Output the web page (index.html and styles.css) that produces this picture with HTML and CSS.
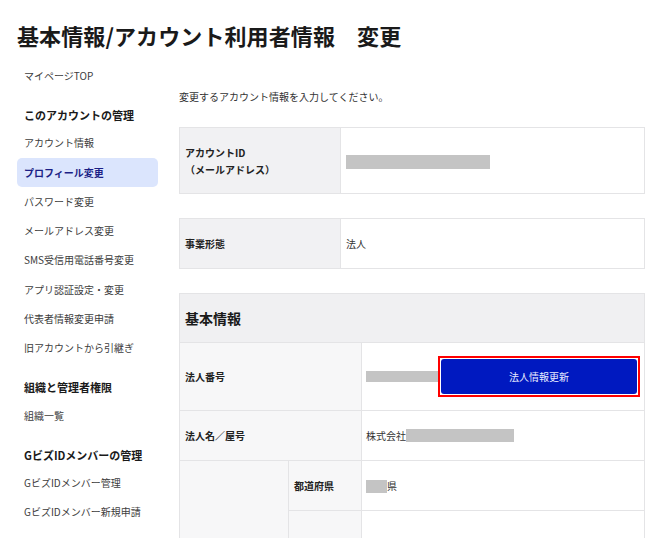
FILE: index.html
```html
<!DOCTYPE html>
<html lang="ja">
<head>
<meta charset="utf-8">
<title>基本情報/アカウント利用者情報 変更</title>
<link rel="stylesheet" href="styles.css">
</head>
<body>
<h1 class="page-title">基本情報/アカウント利用者情報　変更</h1>
<div class="layout">
  <nav class="sidenav">
    <a class="nav-item" href="#">マイページTOP</a>
    <div class="nav-heading">このアカウントの管理</div>
    <a class="nav-item" href="#">アカウント情報</a>
    <a class="nav-item active" href="#">プロフィール変更</a>
    <a class="nav-item" href="#">パスワード変更</a>
    <a class="nav-item" href="#">メールアドレス変更</a>
    <a class="nav-item" href="#">SMS受信用電話番号変更</a>
    <a class="nav-item" href="#">アプリ認証設定・変更</a>
    <a class="nav-item" href="#">代表者情報変更申請</a>
    <a class="nav-item" href="#">旧アカウントから引継ぎ</a>
    <div class="nav-heading">組織と管理者権限</div>
    <a class="nav-item" href="#">組織一覧</a>
    <div class="nav-heading">GビズIDメンバーの管理</div>
    <a class="nav-item" href="#">GビズIDメンバー管理</a>
    <a class="nav-item" href="#">GビズIDメンバー新規申請</a>
  </nav>
  <main class="content">
    <p class="lead">変更するアカウント情報を入力してください。</p>

    <table class="form-table t-account">
      <colgroup><col class="c-label"><col class="c-value"></colgroup>
      <tr>
        <th class="label">アカウントID<br>（メールアドレス）</th>
        <td class="value"><span class="redact redact-id"></span></td>
      </tr>
    </table>

    <table class="form-table t-business">
      <colgroup><col class="c-label"><col class="c-value"></colgroup>
      <tr>
        <th class="label">事業形態</th>
        <td class="value">法人</td>
      </tr>
    </table>

    <table class="form-table t-basic">
      <colgroup>
        <col class="c1"><col class="c2"><col class="c3">
      </colgroup>
      <tr class="r-head">
        <th class="section-head" colspan="3">基本情報</th>
      </tr>
      <tr class="r-corp-no">
        <th class="label light" colspan="2">法人番号</th>
        <td class="value">
          <div class="corp-no">
            <span class="redact redact-no"></span>
            <span class="focus-ring"><button class="btn-primary" type="button">法人情報更新</button></span>
          </div>
        </td>
      </tr>
      <tr class="r-std">
        <th class="label light" colspan="2">法人名／屋号</th>
        <td class="value value-name">株式会社<span class="redact redact-name"></span></td>
      </tr>
      <tr class="r-std">
        <th class="label light" rowspan="3"></th>
        <th class="label light">都道府県</th>
        <td class="value value-pref"><span class="redact redact-pref"></span>県</td>
      </tr>
      <tr class="r-tall">
        <th class="label light"></th>
        <td class="value"></td>
      </tr>
      <tr class="r-tall">
        <th class="label light"></th>
        <td class="value"></td>
      </tr>
    </table>
  </main>
</div>
</body>
</html>
```

FILE: styles.css
```css
html, body {
  margin: 0;
  padding: 0;
  background: #ffffff;
}

body {
  font-family: "Noto Sans CJK JP", "Noto Sans", "Liberation Sans", sans-serif;
  color: #333333;
}

.page-title {
  margin: 0;
  padding: 19px 0 0 17px;
  font-size: 22px;
  line-height: 33px;
  font-weight: 700;
  color: #1a1a1a;
  letter-spacing: 0.1px;
}

.layout {
  display: grid;
  grid-template-columns: 141px 465px;
  column-gap: 21px;
  padding-left: 17px;
  margin-top: 9px;
}

/* side navigation */
.sidenav {
  display: flex;
  flex-direction: column;
}

.nav-item {
  display: block;
  height: 29.3px;
  line-height: 29.3px;
  padding-left: 7px;
  font-size: 10px;
  color: #3d3d3d;
  text-decoration: none;
  border-radius: 5px;
  white-space: nowrap;
}

.nav-item.active {
  background: #dbe5fd;
  color: #1b1f86;
  font-weight: 700;
}

.nav-heading {
  margin-top: 12.7px;
  height: 25.3px;
  line-height: 25.3px;
  padding-left: 7px;
  font-size: 11px;
  font-weight: 700;
  color: #1a1a1a;
  white-space: nowrap;
}

/* main content */
.content {
  padding-top: 27.5px;
}

.lead {
  margin: 0;
  font-size: 10px;
  line-height: 15px;
  color: #333333;
}

.form-table {
  width: 465px;
  border-collapse: collapse;
  table-layout: fixed;
  border: 1px solid #e4e4e6;
}

.form-table th,
.form-table td {
  border: 1px solid #e4e4e6;
  padding: 0 0 0 5px;
  text-align: left;
  vertical-align: middle;
  font-size: 10px;
}

.c-label { width: 161px; }
.c-value { width: 304px; }

.label {
  background: #f1f1f3;
  font-weight: 700;
  color: #222222;
  line-height: 17px;
}

.label.light {
  background: #f7f7f8;
}

.value {
  background: #ffffff;
  color: #333333;
}

.t-account {
  margin-top: 23.5px;
}

.t-account .label {
  height: 65px;
}

.t-business {
  margin-top: 24px;
}

.t-business .label {
  height: 49px;
}

.t-business .value,
.t-account .value {
  padding-left: 5px;
}

.t-basic {
  margin-top: 24px;
}

.t-basic .c1 { width: 109px; }
.t-basic .c2 { width: 73px; }
.t-basic .c3 { width: 283px; }

.section-head {
  background: #f0f0f2;
  height: 48px;
  font-size: 14px !important;
  font-weight: 700;
  color: #1a1a1a;
}

.r-corp-no th,
.r-corp-no td {
  height: 67px;
}

.r-std th,
.r-std td {
  height: 49px;
}

.r-tall th,
.r-tall td {
  height: 90px;
}

.t-basic .value {
  padding-left: 4px;
}

/* redaction bars */
.redact {
  display: inline-block;
  background: #c4c4c4;
  vertical-align: middle;
}

.redact-id {
  width: 144px;
  height: 14px;
}

.redact-no {
  width: 72px;
  height: 11px;
}

.redact-name {
  width: 108px;
  height: 13px;
  position: relative;
  top: -1px;
}

.redact-pref {
  width: 21px;
  height: 13px;
}

.corp-no {
  display: flex;
  align-items: center;
}

.focus-ring {
  display: flex;
  border: 2px solid #ff0000;
  padding: 1px;
  background: #ffffff;
}

.btn-primary {
  display: block;
  width: 196px;
  height: 35px;
  background: #0019c0;
  color: #e8ebff;
  border: none;
  border-radius: 3px;
  font-family: inherit;
  font-size: 10px;
  cursor: pointer;
  padding: 0;
}
```
